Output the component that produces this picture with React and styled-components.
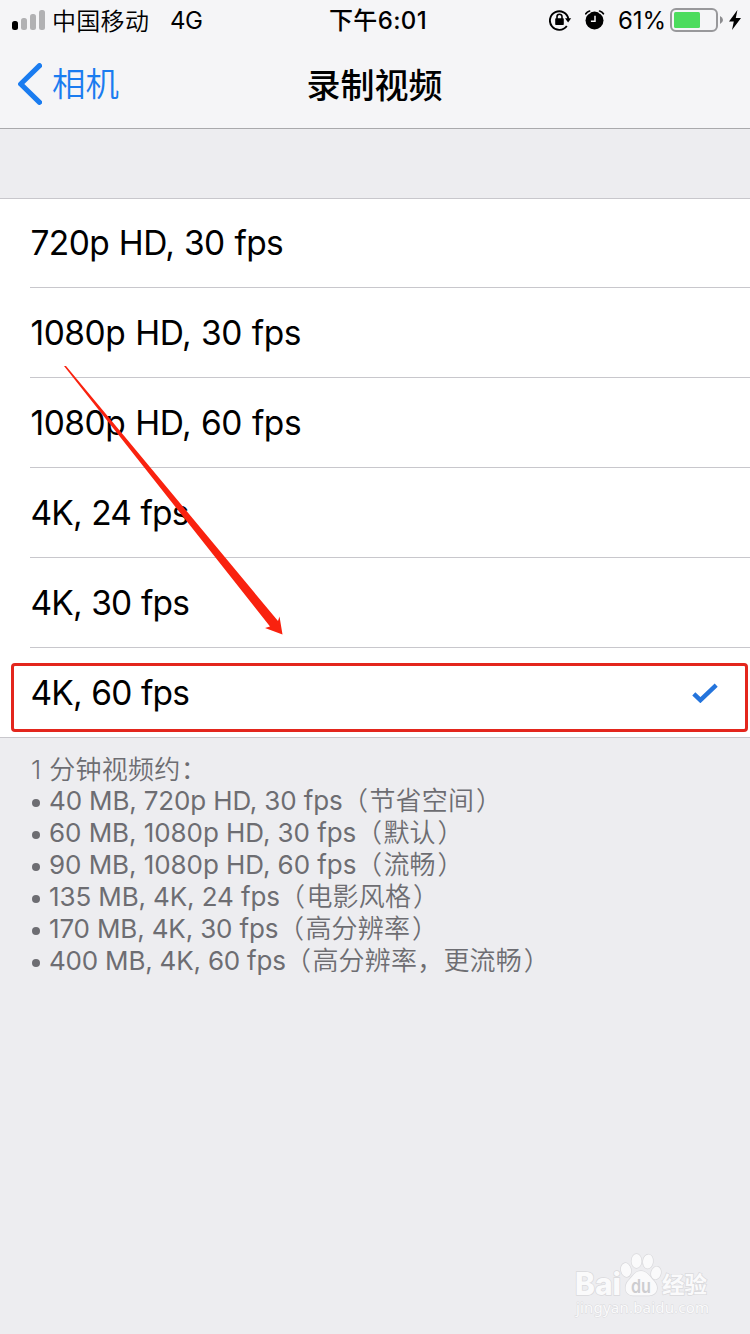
import React from 'react';
import styled, { createGlobalStyle } from 'styled-components';

const GlobalStyle = createGlobalStyle`
  *, *::before, *::after { box-sizing: border-box; }
  html, body { margin: 0; padding: 0; background: #ededf0; }
`;

const Screen = styled.main`
  position: relative;
  width: 750px;
  height: 1334px;
  overflow: hidden;
  background: #ededf0;
  color: #000;
  font-family: Inter, 'Noto Sans CJK SC', sans-serif;
`;

const Header = styled.header`
  height: 129px;
  background: #f5f5f7;
  border-bottom: 1px solid #a9a9ac;
`;

const StatusBar = styled.div`
  display: grid;
  grid-template-columns: 1fr auto 1fr;
  align-items: center;
  height: 40px;
  padding: 0 9px 0 12px;
  font-size: 24px;
  line-height: 36px;
  white-space: nowrap;
`;

const StatusGroup = styled.div`
  display: flex;
  align-items: center;
  justify-content: ${(p) => (p.$end ? 'flex-end' : 'flex-start')};
`;

const Signal = styled.div`
  display: flex;
  align-items: flex-end;
  gap: 3px;
  height: 20px;
  margin-right: 7px;
`;

const SignalBar = styled.span`
  width: 6px;
  height: ${(p) => p.$height}px;
  border-radius: 2.5px;
  background: ${(p) => (p.$on ? '#000' : '#b1b1b3')};
`;

const Carrier = styled.span`
  width: 118px;
  padding-top: 4px;
  font-weight: 350;
  letter-spacing: 0.3px;
`;

const Network = styled.span`
  padding-top: 2px;
  font-size: 24px;
  letter-spacing: -0.4px;
`;

const Clock = styled.time`
  padding: 2px 0 0 3px;
  font-size: 24px;
  font-weight: 500;
  letter-spacing: 0.4px;
`;

const Percent = styled.span`
  width: 53px;
  padding: 1px 0 0 1px;
  font-size: 24px;
  letter-spacing: -0.1px;
`;

const StatusIcon = styled.svg`
  flex: none;
  display: block;
  margin-right: ${(p) => p.$gap || 0}px;
`;

const NavBar = styled.nav`
  display: grid;
  grid-template-columns: 1fr auto 1fr;
  align-items: center;
  height: 88px;
  padding: 0 18px;
`;

const BackLink = styled.a`
  display: flex;
  align-items: center;
  gap: 10px;
  color: #1a7cf0;
  font-size: 33.5px;
  font-weight: 350;
  line-height: 86px;
`;

const Title = styled.h1`
  margin: 0;
  padding: 2px 1px 0 0;
  font-size: 34px;
  font-weight: 500;
  line-height: 85px;
`;

const Options = styled.ul`
  list-style: none;
  margin: 69px 0 0;
  padding: 0;
  background: #fff;
  box-shadow: inset 0 1px #c8c7cc;
  border-bottom: 1px solid #c8c7cc;
`;

const Option = styled.li`
  display: flex;
  align-items: center;
  justify-content: space-between;
  height: 90px;
  margin-left: 30px;
  padding: 0 32px 0 0.5px;
  border-bottom: 1px solid #c8c7cc;
  font-size: 33.5px;
  letter-spacing: ${(p) => p.$tracking}px;
  word-spacing: 1px;
  white-space: nowrap;

  &:last-child {
    height: 89px;
    border-bottom: 0;
  }
`;

const Footer = styled.section`
  padding: 15px 30px;
  color: #6d6d72;
  font-size: 26px;
  line-height: 32px;
`;

const FooterTitle = styled.p`
  margin: 0;
  padding: 1px 0 0 1px;
  height: 32px;
  font-weight: 350;
  letter-spacing: 0.3px;
`;

const Notes = styled.ul`
  list-style: none;
  margin: 0;
  padding: 0;
`;

const Note = styled.li`
  display: flex;
  align-items: center;
  height: 32px;
  white-space: nowrap;

  &::before {
    content: '';
    width: 8px;
    height: 8px;
    margin: 3px 9px 0 2px;
    border-radius: 50%;
    background: #6d6d72;
  }
`;

const NoteSpec = styled.span`
  width: ${(p) => p.$width}px;
  letter-spacing: ${(p) => p.$tracking || 0}px;
`;

const NoteText = styled.span`
  font-weight: 350;
  letter-spacing: 0.2px;

  &::before {
    content: '（';
    margin: 0 1.2px 0 -2px;
  }

  &::after {
    content: '）';
    margin-left: 1.8px;
  }
`;

const Highlight = styled.div`
  position: absolute;
  left: 11px;
  top: 663px;
  width: 737px;
  height: 69px;
  border: 3px solid #e3261d;
  border-radius: 4px;
`;

const Arrow = styled.svg`
  position: absolute;
  left: 60px;
  top: 360px;
`;

const Watermark = styled.svg`
  position: absolute;
  left: 570px;
  top: 1246px;
`;

const options = [
  { label: '720p HD, 30 fps', tracking: -0.62 },
  { label: '1080p HD, 30 fps', tracking: -0.47 },
  { label: '1080p HD, 60 fps', tracking: -0.47 },
  { label: '4K, 24 fps', tracking: -0.88 },
  { label: '4K, 30 fps', tracking: -0.86 },
  { label: '4K, 60 fps', tracking: -0.86, selected: true },
];

const notes = [
  { spec: '40 MB, 720p HD, 30 fps', width: 295, tracking: -0.15, text: '节省空间' },
  { spec: '60 MB, 1080p HD, 30 fps', width: 309, tracking: -0.06, text: '默认' },
  { spec: '90 MB, 1080p HD, 60 fps', width: 309, tracking: -0.06, text: '流畅' },
  { spec: '135 MB, 4K, 24 fps', width: 232, tracking: -0.12, text: '电影风格' },
  { spec: '170 MB, 4K, 30 fps', width: 231, tracking: -0.15, text: '高分辨率' },
  { spec: '400 MB, 4K, 60 fps', width: 238, tracking: -0.2, text: '高分辨率，更流畅' },
];

function RotationLock() {
  return (
    <StatusIcon width="24" height="22" viewBox="0 0 24 22" $gap={12}>
      <path d="M17.800 17A9.300 9.300 0 1 1 19.400 10" fill="none" stroke="#000" strokeWidth="1.900" />
      <path d="M16 9.200h6.200l-3.100 4.200z" />
      <rect x="6.200" y="9.300" width="8.600" height="6.700" rx="0.800" />
      <path d="M8 10V7.700a2.500 2.500 0 0 1 5 0V10" fill="none" stroke="#000" strokeWidth="1.600" />
    </StatusIcon>
  );
}

function Alarm() {
  return (
    <StatusIcon width="20" height="20" viewBox="0 0 20 20" $gap={12}>
      <circle cx="9.500" cy="10.500" r="9" />
      <path d="M.8 4.200Q2 2 5 1M18.400 4.200Q17.200 2 14.200 1" fill="none" stroke="#f5f5f7" strokeWidth="4" />
      <path d="M.8 3.800Q2 1.800 4.600 1M18.400 3.800Q17.200 1.800 14.600 1" fill="none" stroke="#000" strokeWidth="1.700" strokeLinecap="round" />
      <path d="M10 5.700v5.600H5.900" fill="none" stroke="#f5f5f7" strokeWidth="1.500" />
    </StatusIcon>
  );
}

function Battery() {
  return (
    <StatusIcon width="54" height="24" viewBox="0 0 54 24" $gap={5}>
      <rect x="1" y="1" width="46" height="22" rx="5" fill="none" stroke="#98989b" strokeWidth="2" />
      <rect x="4" y="4" width="26" height="16" rx="1.500" fill="#4cdc5d" />
      <path d="M50 8q3 1.600 3 4t-3 4z" fill="#8c8c8f" />
    </StatusIcon>
  );
}

export default function App() {
  return (
    <Screen>
      <GlobalStyle />
      <Header>
        <StatusBar>
          <StatusGroup>
            <Signal>
              <SignalBar $height={9} $on />
              <SignalBar $height={12} />
              <SignalBar $height={16} />
              <SignalBar $height={20} />
            </Signal>
            <Carrier>中国移动</Carrier>
            <Network>4G</Network>
          </StatusGroup>
          <Clock>下午6:01</Clock>
          <StatusGroup $end>
            <RotationLock />
            <Alarm />
            <Percent>61%</Percent>
            <Battery />
            <StatusIcon width="12" height="20" viewBox="0 0 12 20">
              <path d="M8.400 0 0 11.400h4.800L3 20l9-12H6.800z" />
            </StatusIcon>
          </StatusGroup>
        </StatusBar>
        <NavBar>
          <BackLink>
            <svg width="24" height="42" viewBox="0 0 24 42">
              <path d="M21.500 2.700 2.700 21l18.800 18.300" fill="none" stroke="#1a7cf0" strokeWidth="5.200" strokeLinecap="round" strokeLinejoin="round" />
            </svg>
            <span>相机</span>
          </BackLink>
          <Title>录制视频</Title>
        </NavBar>
      </Header>

      <Options>
        {options.map((o) => (
          <Option key={o.label} $tracking={o.tracking}>
            {o.label}
            {o.selected && (
              <svg width="26" height="20" viewBox="0 0 26 20">
                <path d="M1.800 10.800 8.400 17.200 24.200 2.200" fill="none" stroke="#2474dc" strokeWidth="4.400" />
              </svg>
            )}
          </Option>
        ))}
      </Options>

      <Footer>
        <FooterTitle>1 分钟视频约：</FooterTitle>
        <Notes>
          {notes.map((n) => (
            <Note key={n.spec}>
              <NoteSpec $width={n.width} $tracking={n.tracking}>{n.spec}</NoteSpec>
              <NoteText>{n.text}</NoteText>
            </Note>
          ))}
        </Notes>
      </Footer>

      <Highlight />
      <Arrow width="230" height="280" viewBox="60 360 230 280">
        <path d="M64 366 66 366 278 621 279.500 616.500 282.500 634.500 265 628 270 626.500z" fill="#f9220f" />
      </Arrow>

      <Watermark width="150" height="76" viewBox="570 1246 150 76">
        <g fill="#fafafb" stroke="#d9d9dc" strokeWidth="1.400" paintOrder="stroke">
          <text x="575" y="1295" fontFamily="Inter, sans-serif" fontWeight="800" fontSize="31" textLength="46" lengthAdjust="spacingAndGlyphs">Bai</text>
          <ellipse cx="626" cy="1270" rx="5" ry="7" transform="rotate(-12 626 1270)" />
          <ellipse cx="636.500" cy="1261" rx="5" ry="7" />
          <ellipse cx="648" cy="1261.500" rx="5" ry="7" transform="rotate(8 648 1261.500)" />
          <ellipse cx="656" cy="1273" rx="4.800" ry="6.500" transform="rotate(15 656 1273)" />
          <path d="M641 1271c-6 0-8 5-12 9-5 5-5 15 4 15.500h16c9-.5 10-9 5-14.500-4-4-7-10-13-10z" />
          <text x="662" y="1292.500" fontFamily="'Noto Sans CJK SC', sans-serif" fontWeight="700" fontSize="22.500" textLength="45">经验</text>
          <text x="576" y="1313" fontFamily="'Noto Sans', sans-serif" fontSize="15" textLength="133" strokeWidth="0.900">jingyan.baidu.com</text>
        </g>
        <text x="631" y="1292.500" fill="#cdcdd0" fontFamily="Inter, sans-serif" fontWeight="600" fontSize="19" textLength="20" lengthAdjust="spacingAndGlyphs">du</text>
      </Watermark>
    </Screen>
  );
}
